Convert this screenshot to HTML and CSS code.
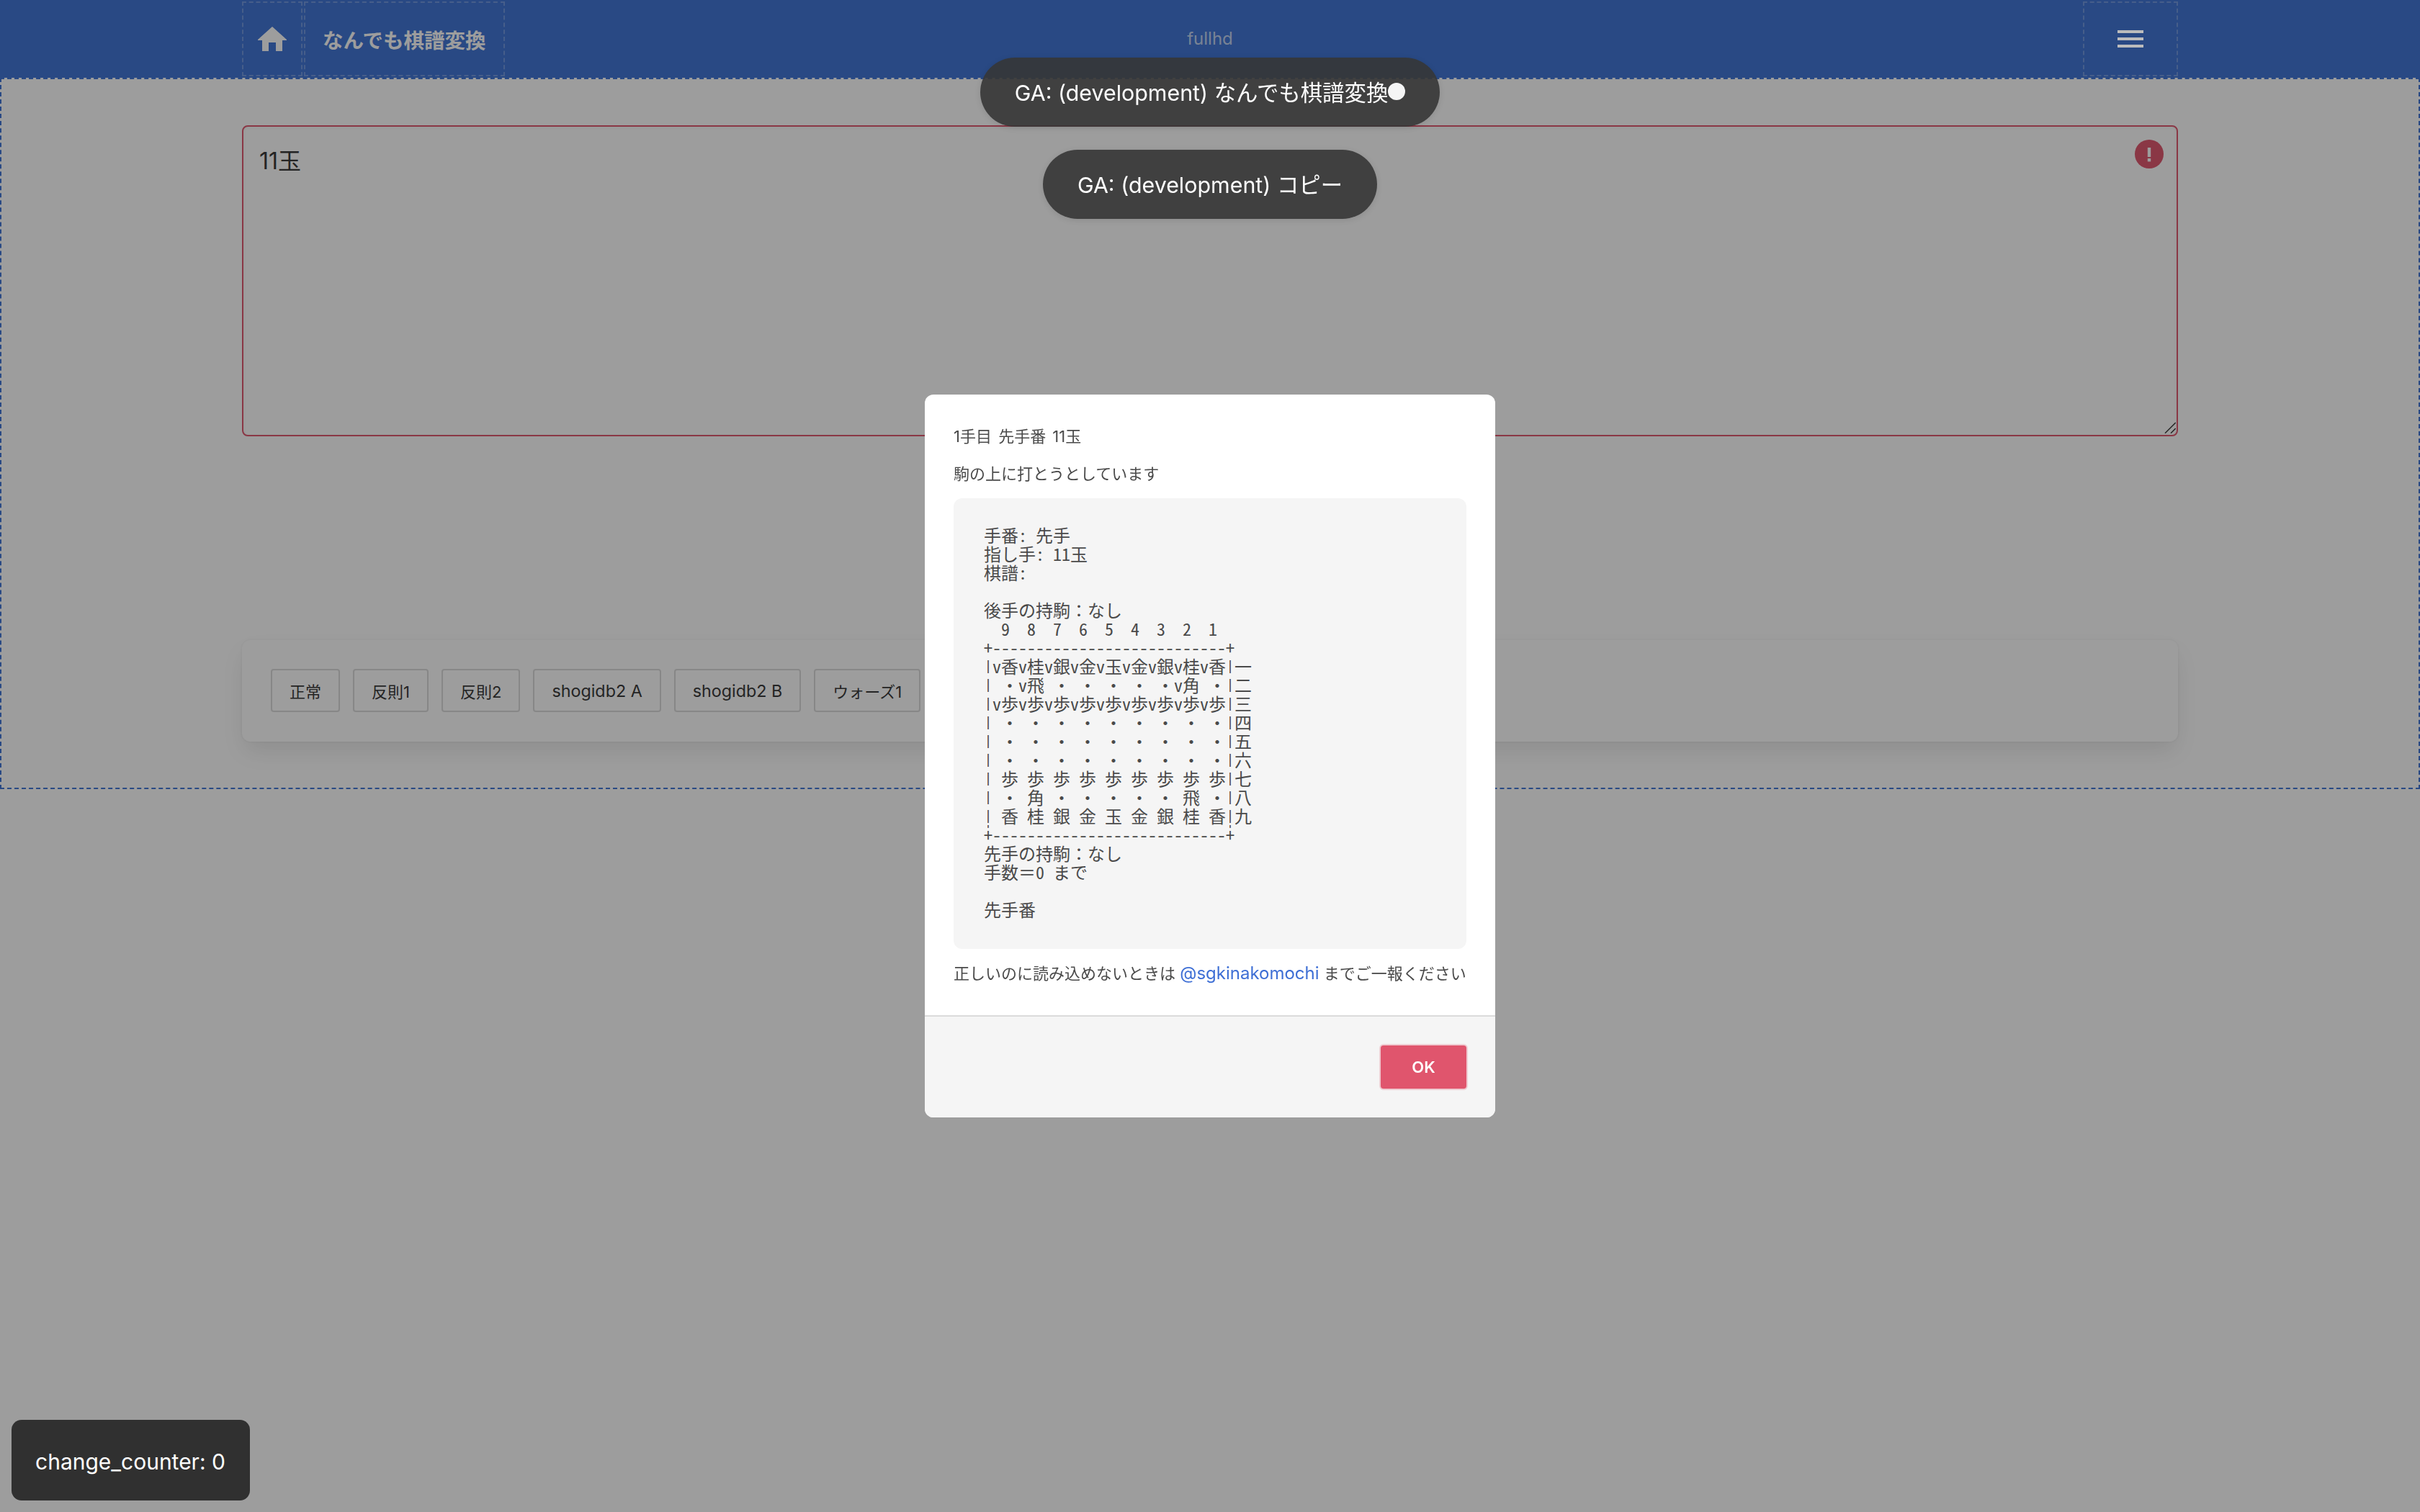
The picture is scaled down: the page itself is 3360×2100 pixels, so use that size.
FILE: index.html
```html
<!DOCTYPE html>
<html lang="ja">
<head>
    <meta charset="UTF-8">
    <title>なんでも棋譜変換</title>
    <link rel="stylesheet" href="styles.css">
</head>
<body>
    <nav class="navbar">
        <div class="navbar-left">
            <a class="navbar-item home-item">
                <svg class="home-icon" viewBox="0 0 40 34"><path d="M20 0 L40 18 L40 19 L34 19 L34 34 L25 34 L25 22 L15 22 L15 34 L6 34 L6 19 L0 19 L0 18 Z"/></svg>
            </a>
            <a class="navbar-item title-item">なんでも棋譜変換</a>
        </div>
        <div class="navbar-center">fullhd</div>
        <a class="navbar-item burger-item">
            <span class="burger">
                <span class="burger-line"></span>
                <span class="burger-line"></span>
                <span class="burger-line"></span>
            </span>
        </a>
    </nav>

    <main class="main-section">
        <div class="field">
            <textarea class="textarea" spellcheck="false">11玉</textarea>
            <svg class="error-icon" viewBox="0 0 40 40">
                <circle class="error-circle" cx="20" cy="20" r="20"/>
                <rect class="error-mark" x="17.8" y="11" width="4.4" height="13"/>
                <rect class="error-mark" x="17.8" y="26" width="4.4" height="4.4"/>
            </svg>
            <svg class="resize-grip" viewBox="0 0 16 16">
                <path d="M1 15.7 L15.7 1 M9 15.7 L15.7 9"/>
            </svg>
        </div>

        <div class="box">
            <a class="button">正常</a>
            <a class="button">反則1</a>
            <a class="button">反則2</a>
            <a class="button button-latin">shogidb2 A</a>
            <a class="button button-latin">shogidb2 B</a>
            <a class="button">ウォーズ1</a>
        </div>
    </main>

    <div class="modal">
        <div class="modal-background"></div>
        <div class="modal-card">
            <section class="modal-body">
                <p class="move-title">1手目 先手番 11玉</p>
                <p>駒の上に打とうとしています</p>
<pre class="kif">手番: 先手
指し手: 11玉
棋譜:

後手の持駒：なし
  9  8  7  6  5  4  3  2  1
+---------------------------+
|v香v桂v銀v金v玉v金v銀v桂v香|一
| ・v飛 ・ ・ ・ ・ ・v角 ・|二
|v歩v歩v歩v歩v歩v歩v歩v歩v歩|三
| ・ ・ ・ ・ ・ ・ ・ ・ ・|四
| ・ ・ ・ ・ ・ ・ ・ ・ ・|五
| ・ ・ ・ ・ ・ ・ ・ ・ ・|六
| 歩 歩 歩 歩 歩 歩 歩 歩 歩|七
| ・ 角 ・ ・ ・ ・ ・ 飛 ・|八
| 香 桂 銀 金 玉 金 銀 桂 香|九
+---------------------------+
先手の持駒：なし
手数＝0 まで

先手番</pre>
                <p>正しいのに読み込めないときは <a class="link">@sgkinakomochi</a> までご一報ください</p>
            </section>
            <footer class="modal-footer">
                <button type="button" class="ok-button">OK</button>
            </footer>
        </div>
    </div>

    <div class="toasts">
        <div class="toast">GA: (development) なんでも棋譜変換<span class="toast-dot"></span></div>
        <div class="toast">GA: (development) コピー</div>
    </div>

    <div class="counter">change_counter: 0</div>
</body>
</html>
```

FILE: styles.css
```css
body {
    font-family: Inter, "Noto Sans CJK JP", sans-serif;
    margin: 0;
    padding: 0;
    height: 2100px;
    overflow: hidden;
    background-color: #fff;
    color: #363636;
}

/* navbar */
.navbar {
    height: 108px;
    padding: 2px 336px;
    box-sizing: border-box;
    display: flex;
    justify-content: space-between;
    align-items: stretch;
    position: relative;
    background-color: #3e74d5;
}
.navbar-left {
    display: flex;
}
.navbar-item {
    display: flex;
    align-items: center;
    justify-content: center;
    box-sizing: border-box;
    border: 2px dashed rgba(255, 255, 255, 0.25);
}
.home-item {
    width: 84px;
}
.home-icon {
    width: 40px;
    height: 34px;
    fill: #fff;
}
.title-item {
    padding: 0 24px;
    margin-left: 2px;
    font-size: 28.5px;
    font-weight: 700;
    color: #fff;
}
.navbar-center {
    position: absolute;
    left: 0;
    right: 0;
    top: 0;
    height: 108px;
    line-height: 108px;
    text-align: center;
    font-size: 24px;
    color: rgba(255, 255, 255, 0.7);
}
.burger-item {
    width: 132px;
}
.burger {
    display: flex;
    flex-direction: column;
    gap: 6px;
    width: 36px;
    position: relative;
    z-index: 11;
}
.burger-line {
    height: 4px;
    background-color: #bcbcbc;
}

/* main */
.main-section {
    height: 988px;
    box-sizing: border-box;
    border: 2px dashed #3e74d5;
    padding: 64px 334px;
}
.field {
    position: relative;
    height: 432px;
}
.textarea {
    display: block;
    width: 100%;
    height: 100%;
    box-sizing: border-box;
    padding: 24px 22px;
    border: 2px solid #e0556d;
    border-radius: 8px;
    outline: none;
    resize: none;
    font-family: inherit;
    font-size: 32px;
    line-height: 48px;
    color: #363636;
    background-color: #fff;
    box-shadow: inset 0 1px 4px rgba(10, 10, 10, 0.05);
}
.error-icon {
    position: absolute;
    top: 20px;
    right: 20px;
    width: 40px;
    height: 40px;
}
.error-circle {
    fill: #e0556d;
}
.error-mark {
    fill: #fff;
}
.resize-grip {
    position: absolute;
    right: 3px;
    bottom: 4px;
    width: 16px;
    height: 16px;
    fill: none;
    stroke: #363636;
    stroke-width: 1.5;
}
.box {
    margin-top: 283px;
    height: 141px;
    box-sizing: border-box;
    padding: 40px;
    display: flex;
    gap: 18px;
    background-color: #fff;
    border-radius: 12px;
    box-shadow: 0 16px 32px -4px rgba(10, 10, 10, 0.1), 0 0 0 2px rgba(10, 10, 10, 0.02);
}
.button {
    height: 60px;
    box-sizing: border-box;
    padding: 0 24px;
    display: flex;
    align-items: center;
    border: 2px solid #dbdbdb;
    border-radius: 4px;
    font-size: 22px;
    white-space: nowrap;
}
.button-latin {
    font-size: 23.3px;
}

/* modal */
.modal {
    position: fixed;
    inset: 0;
    z-index: 10;
    display: flex;
    align-items: center;
    justify-content: center;
}
.modal-background {
    position: absolute;
    inset: 0;
    background-color: rgba(10, 10, 10, 0.4);
}
.modal-card {
    position: relative;
    width: 792px;
    height: 1004px;
    display: flex;
    flex-direction: column;
    border-radius: 12px;
    overflow: hidden;
    background-color: #fff;
}
.modal-body {
    padding: 40px;
    font-size: 22px;
    line-height: 36px;
    color: #4a4a4a;
}
.modal-body p {
    margin: 0 0 16px;
    white-space: nowrap;
}
.modal-body p:last-child {
    margin-bottom: 0;
}
.modal-body .move-title {
    word-spacing: 3px;
}
.link {
    font-size: 24px;
    color: #3e6fd5;
}
.kif {
    position: relative;
    margin: 0 0 16px;
    padding: 38px 40px 40px 42px;
    height: 626px;
    box-sizing: border-box;
    border-radius: 12px;
    background-color: #f5f5f5;
    font-family: "Noto Sans Mono CJK JP", "Noto Sans CJK JP", monospace;
    font-size: 24px;
    line-height: 26px;
    color: #4a4a4a;
}
/* the mono | glyph is taller than a row, cut it back so the board edges don't join up */
.kif::before,
.kif::after {
    content: "";
    position: absolute;
    top: 220px;
    width: 12px;
    height: 234px;
    background: repeating-linear-gradient(#f5f5f5 0, #f5f5f5 5px, transparent 5px, transparent 23px, #f5f5f5 23px, #f5f5f5 26px);
}
.kif::before {
    left: 42px;
}
.kif::after {
    left: 378px;
}
.modal-footer {
    flex: 1;
    box-sizing: border-box;
    padding: 40px;
    display: flex;
    justify-content: flex-end;
    border-top: 2px solid #dbdbdb;
    background-color: #f5f5f5;
}
.ok-button {
    width: 119px;
    height: 60px;
    border: none;
    border-radius: 4px;
    background-color: #e0556d;
    box-shadow: 0 0 0 2px rgba(224, 85, 109, 0.25);
    font-family: inherit;
    font-size: 22px;
    font-weight: 600;
    color: #fff;
}

/* toasts */
.toasts {
    position: fixed;
    top: 80px;
    left: 0;
    right: 0;
    z-index: 20;
    display: flex;
    flex-direction: column;
    align-items: center;
    gap: 32px;
}
.toast {
    height: 96px;
    padding: 0 48px 2px;
    box-sizing: border-box;
    display: flex;
    align-items: center;
    border-radius: 48px;
    background-color: rgba(54, 54, 54, 0.9);
    box-shadow: 0 2px 8px rgba(10, 10, 10, 0.1);
    font-size: 30.4px;
    color: #fff;
    white-space: pre;
}
.toast-dot {
    width: 24px;
    height: 24px;
    border-radius: 50%;
    background-color: #f5f5f5;
}

/* counter */
.counter {
    position: fixed;
    left: 16px;
    bottom: 16px;
    z-index: 20;
    padding: 34px 34px 30px 33px;
    height: 112px;
    box-sizing: border-box;
    border-radius: 14px;
    background-color: #303030;
    font-size: 30px;
    line-height: 48px;
    color: #fff;
}
```
